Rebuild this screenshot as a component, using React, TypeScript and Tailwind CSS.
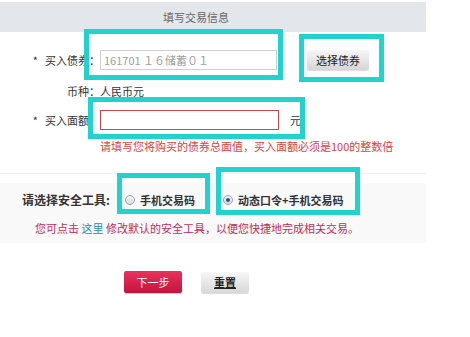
import React from "react"

const font = { fontFamily: '"Noto Sans CJK SC", "Liberation Sans", sans-serif' }

function Highlight({ className }: { className: string }) {
	return <div className={`pointer-events-none absolute border-[5px] border-[#22d2cf] ${className}`} />
}

function Radio({ checked }: { checked?: boolean }) {
	return (
		<span className="flex h-[10px] w-[10px] items-center justify-center rounded-full border border-[#9aa3ad] bg-gradient-to-b from-[#f4f4f4] to-[#dcdcdc]">
			{checked && <span className="h-[4px] w-[4px] rounded-full bg-[#2c4f86]" />}
		</span>
	)
}

function FieldLabel({ text, star }: { text: string; star?: boolean }) {
	return (
		<div className="flex w-[100px] shrink-0 items-center justify-end text-[11px] text-[#333]">
			{star && <span className="mr-[7px] text-[#333]">*</span>}
			<span>{text}</span>
		</div>
	)
}

export default function App() {
	return (
		<div className="relative h-[337px] w-[470px] overflow-hidden bg-white" style={font}>
			<div className="mt-[2px] flex h-[30px] w-[426px] items-center justify-center bg-[#e3e7eb] text-[11px] text-[#666]">
				<span className="ml-[-34px]">填写交易信息</span>
			</div>

			<div className="mt-[18px] flex h-[20px] items-center">
				<FieldLabel text="买入债券：" star />
				<div className="flex h-[20px] w-[177px] items-center border border-[#cfcfcf] pl-[3px] text-[11px] text-[#a0a0a0]">
					161701 １６储蓄０１
				</div>
				<button className="ml-[30px] h-[20px] w-[62px] rounded-[2px] bg-gradient-to-b from-[#f7f7f7] to-[#d6d6d6] text-[11px] text-[#222] shadow-[0_1px_1px_rgba(0,0,0,0.15)]">
					选择债券
				</button>
			</div>

			<div className="mt-[13px] flex h-[16px] items-center">
				<FieldLabel text="币种：" />
				<span className="text-[11px] text-[#333]">人民币元</span>
			</div>

			<div className="mt-[11px] flex h-[20px] items-center">
				<FieldLabel text="买入面额：" star />
				<div className="h-[20px] w-[179px] border border-[#c9474a] bg-white" />
				<span className="ml-[11px] text-[11px] text-[#333]">元</span>
			</div>

			<div className="mt-[8px] pl-[100px] text-[11px] leading-[16px] text-[#e0403a]">
				请填写您将购买的债券总面值，买入面额必须是100的整数倍
			</div>

			<div className="mt-[19px] h-[10px] w-[426px] border-t border-[#f0f0f0]" />

			<div className="w-[426px] bg-[#f9f9f9] pb-[7px] pt-[9px]">
				<div className="flex h-[16px] items-center pl-[22px]">
					<span className="text-[12px] font-bold text-[#333]">请选择安全工具:</span>
					<span className="ml-[15px] flex items-center">
						<Radio />
						<span className="ml-[5px] text-[11px] font-semibold text-[#333]">手机交易码</span>
					</span>
					<span className="ml-[28px] flex items-center">
						<Radio checked />
						<span className="ml-[5px] text-[11px] font-semibold text-[#333]">动态口令+手机交易码</span>
					</span>
				</div>
				<div className="mt-[12px] pl-[35px] text-[11px] leading-[16px] text-[#c22c58]">
					您可点击 <span className="text-[#2a8bb0]">这里</span> 修改默认的安全工具，以便您快捷地完成相关交易。
				</div>
			</div>

			<div className="mt-[28px] flex items-center">
				<button className="ml-[124px] h-[22px] w-[58px] rounded-[2px] bg-gradient-to-b from-[#e8325e] to-[#c4103e] text-[11px] text-white shadow-[0_1px_1px_rgba(0,0,0,0.2)]">
					下一步
				</button>
				<button className="ml-[19px] h-[21px] w-[48px] rounded-[2px] bg-gradient-to-b from-[#f7f7f7] to-[#d8d8d8] text-[11px] font-semibold text-[#222] underline shadow-[0_1px_1px_rgba(0,0,0,0.15)]">
					重置
				</button>
			</div>

			<Highlight className="left-[84px] top-[29px] h-[51px] w-[199px]" />
			<Highlight className="left-[299px] top-[34px] h-[48px] w-[85px]" />
			<Highlight className="left-[88px] top-[97px] h-[42px] w-[217px]" />
			<Highlight className="left-[117px] top-[173px] h-[41px] w-[93px]" />
			<Highlight className="left-[216px] top-[167px] h-[48px] w-[144px]" />
		</div>
	)
}
